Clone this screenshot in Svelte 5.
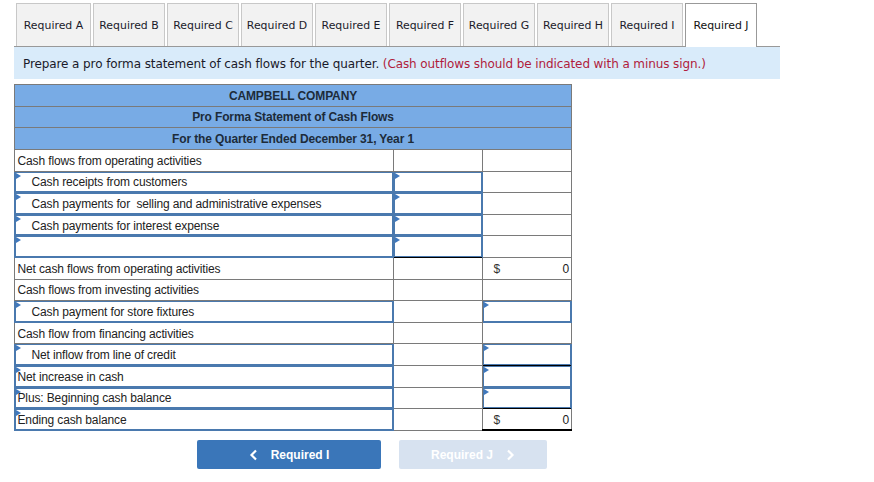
<script>
  const tabs = ['A', 'B', 'C', 'D', 'E', 'F', 'G', 'H', 'I', 'J'];

  // kind: input cells get the blue box, total cells show the $ and value
  const rows = [
    { label: 'Cash flows from operating activities' },
    { label: 'Cash receipts from customers', indent: true, inputLabel: true, col2: 'input' },
    { label: 'Cash payments for  selling and administrative expenses', indent: true, inputLabel: true, col2: 'input' },
    { label: 'Cash payments for interest expense', indent: true, inputLabel: true, col2: 'input' },
    { label: '', indent: true, inputLabel: true, col2: 'input' },
    { label: 'Net cash flows from operating activities', col3: 'total', topBlack2: true },
    { label: 'Cash flows from investing activities' },
    { label: 'Cash payment for store fixtures', indent: true, inputLabel: true, col3: 'input' },
    { label: 'Cash flow from financing activities' },
    { label: 'Net inflow from line of credit', indent: true, inputLabel: true, col3: 'input' },
    { label: 'Net increase in cash', inputLabel: true, col3: 'input', topBlack3: true },
    { label: 'Plus: Beginning cash balance', inputLabel: true, col3: 'input' },
    { label: 'Ending cash balance', inputLabel: true, col3: 'total', topBlack3: true, grand: true }
  ];
</script>

<div class="page">
  <div class="tabs">
    {#each tabs as t}
      <button class="tab" class:first={t === 'A'} class:active={t === 'J'}>Required {t}</button>
    {/each}
  </div>

  <div class="banner">
    Prepare a pro forma statement of cash flows for the quarter.
    <span class="note">(Cash outflows should be indicated with a minus sign.)</span>
  </div>

  <table>
    <colgroup>
      <col class="c1" />
      <col class="c2" />
      <col class="c3" />
    </colgroup>
    <thead>
      <tr><th colspan="3">CAMPBELL COMPANY</th></tr>
      <tr><th colspan="3">Pro Forma Statement of Cash Flows</th></tr>
      <tr><th colspan="3">For the Quarter Ended December 31, Year 1</th></tr>
    </thead>
    <tbody>
      {#each rows as r}
        <tr>
          <td class:input={r.inputLabel} class:indent={r.indent}>{r.label}</td>
          <td class:input={r.col2 === 'input'} class:black-top={r.topBlack2}></td>
          <td
            class:input={r.col3 === 'input'}
            class:black-top={r.topBlack3}
            class:grand={r.grand}
          >
            {#if r.col3 === 'total'}
              <div class="total"><span class="dollar">$</span><span>0</span></div>
            {/if}
          </td>
        </tr>
      {/each}
    </tbody>
  </table>

  <div class="nav">
    <button class="nav-btn prev">
      <svg width="9" height="12" viewBox="0 0 9 12"><path d="M7 1.5 2.5 6 7 10.5" fill="none" stroke="#fff" stroke-width="2.2" /></svg>
      Required I
    </button>
    <button class="nav-btn next" disabled>
      Required J
      <svg width="9" height="12" viewBox="0 0 9 12"><path d="M2 1.5 6.5 6 2 10.5" fill="none" stroke="#fff" stroke-width="2.2" /></svg>
    </button>
  </div>
</div>

<style>
  :global(body) {
    background: #fff;
  }
  .page {
    width: 874px;
    height: 482px;
    padding: 3px 0 0 14px;
    box-sizing: border-box;
    overflow: hidden;
  }
  .tabs {
    display: flex;
    gap: 2px;
    width: 766px;
    height: 44px;
    padding-left: 2px;
    box-sizing: border-box;
    border-bottom: 1px solid #999;
  }
  .tab {
    width: 72px;
    height: 43px;
    padding: 0;
    background: #f2f2f2;
    border: 1px solid #c8c8c8;
    border-bottom: none;
    font: 10.9px Verdana, "DejaVu Sans", sans-serif;
    color: #1a1a2a;
  }
  .tab.first {
    width: 75px;
  }
  .tab.active {
    background: #fff;
    border-color: #999;
    height: 44px;
    position: relative;
    z-index: 1;
    color: #111;
  }
  .banner {
    width: 766px;
    height: 32px;
    padding-left: 9px;
    box-sizing: border-box;
    background: #d9ebfa;
    font: 12px/34px Verdana, "DejaVu Sans", sans-serif;
    letter-spacing: -0.1px;
    color: #1a1a2a;
    white-space: nowrap;
  }
  .note {
    color: #b01c3c;
  }
  table {
    margin-top: 5px;
    width: 557px;
    table-layout: fixed;
    border-collapse: collapse;
    font: 12px "Liberation Sans", Arial, sans-serif;
    letter-spacing: -0.13px;
    color: #222;
  }
  .c1 {
    width: 379px;
  }
  .c2 {
    width: 89px;
  }
  .c3 {
    width: 89px;
  }
  th {
    height: 21.67px;
    padding: 1px 0 0;
    box-sizing: border-box;
    background: #78abe5;
    border: 1px solid #7a7a7a;
    font-weight: bold;
    text-align: center;
    color: #1d2b3a;
  }
  td {
    height: 21.6px;
    padding: 1px 0 0 2.5px;
    box-sizing: border-box;
    border: 1px solid #7a7a7a;
    position: relative;
    white-space: pre;
  }
  td.indent {
    padding-left: 16.5px;
  }
  td.input {
    border-color: #4a79ae;
    box-shadow: inset 0 0 0 1px #4a79ae;
  }
  td.input::before {
    content: '';
    position: absolute;
    left: 1px;
    top: 1px;
    border-left: 5px solid #3f78bd;
    border-top: 3px solid transparent;
    border-bottom: 3px solid transparent;
  }
  /* sits over the shared edge, the upper cell's border wins the collapse */
  td.black-top::after {
    content: '';
    position: absolute;
    left: 0;
    right: 0;
    top: -1px;
    height: 1px;
    background: #000;
  }
  td.grand {
    border-bottom: 2px solid #000;
  }
  .total {
    display: flex;
    justify-content: space-between;
    padding: 0 2px 0 8px;
  }
  .dollar {
    color: #333;
  }
  .nav {
    display: flex;
    gap: 18px;
    margin: 9px 0 0 183px;
  }
  .nav-btn {
    display: flex;
    align-items: center;
    justify-content: center;
    gap: 13px;
    height: 29px;
    padding: 0;
    border: none;
    border-radius: 2px;
    color: #fff;
    font: bold 12px "Liberation Sans", Arial, sans-serif;
  }
  .prev {
    width: 184px;
    background: #3a76b9;
  }
  .next {
    width: 148px;
    background: #d7e2f0;
  }
</style>
